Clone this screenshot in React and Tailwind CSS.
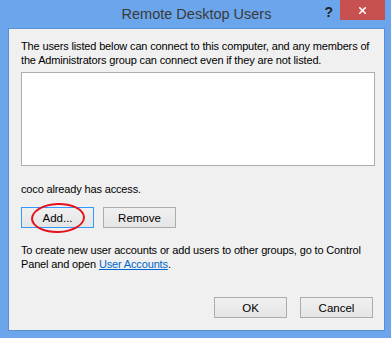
import { X } from "lucide-react";

function Btn({ children, focused, className = "" }) {
  return (
    <button
      className={`h-[21px] w-[73px] flex items-center justify-center text-[11.5px] text-[#000] bg-gradient-to-b from-[#f0f0f0] to-[#e5e5e5] border ${
        focused ? "border-[#3399ff]" : "border-[#acacac]"
      } ${className}`}
    >
      {children}
    </button>
  );
}

export default function App() {
  return (
    <div
      className="w-[391px] h-[338px] bg-[#6ba6ec] flex flex-col px-[8px] overflow-hidden"
      style={{ fontFamily: '"Liberation Sans", Arial, sans-serif' }}
    >
      {/* title bar */}
      <div className="h-[28px] relative flex items-center justify-center shrink-0">
        <span className="text-[14.5px] text-[#3a3a3a] mt-[1px] ml-[2px]">Remote Desktop Users</span>
        <span className="absolute right-[50px] top-[2px] text-[14px] font-bold text-[#222]">?</span>
        <div className="absolute right-[-2px] top-0 w-[45px] h-[20px] bg-[#c75050] flex items-center justify-center">
          <X size={11} strokeWidth={3.5} color="#fff" />
        </div>
      </div>

      {/* body */}
      <div className="w-[377px] h-[303px] bg-[#f0f0f0] border border-[#5b8fd0] pl-[12px] pr-[10px] pt-[10px] text-[11px] leading-[14px] tracking-[-0.15px] text-[#000] flex flex-col">
        <p className="whitespace-nowrap">
          The users listed below can connect to this computer, and any members of
          <br />
          the Administrators group can connect even if they are not listed.
        </p>
        <div className="mt-[5px] h-[94px] w-[354px] bg-white border border-[#abadb3]" />
        <p className="mt-[16px]">coco already has access.</p>
        <div className="mt-[11px] flex gap-[9px] tracking-normal">
          <div className="relative">
            <Btn focused>Add...</Btn>
            <div className="absolute left-[10px] top-[-4px] w-[54px] h-[30px] rounded-[50%] border-2 border-[#e4121c] -rotate-2" />
          </div>
          <Btn>Remove</Btn>
        </div>
        <p className="mt-[15px] whitespace-nowrap">
          To create new user accounts or add users to other groups, go to Control
          <br />
          Panel and open <span className="text-[#0066cc] underline">User Accounts</span>.
        </p>
        <div className="mt-auto mb-[12px] flex justify-end gap-[13px] pr-[1px] tracking-normal">
          <Btn>OK</Btn>
          <Btn>Cancel</Btn>
        </div>
      </div>
    </div>
  );
}
